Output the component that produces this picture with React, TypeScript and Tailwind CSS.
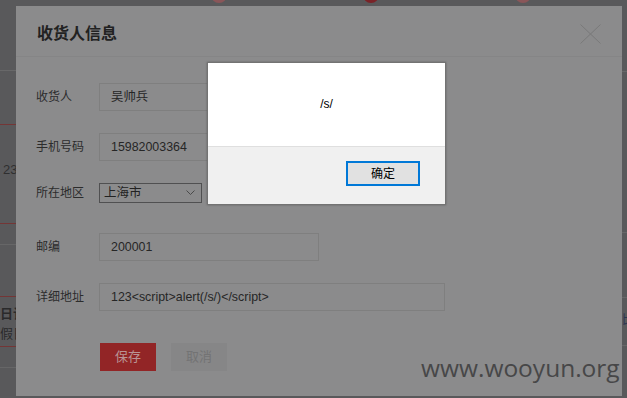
import React from "react";

const cjk = { fontFamily: '"Liberation Sans","Noto Sans CJK SC",sans-serif' };

function Label({ children, className = "" }: { children: React.ReactNode; className?: string }) {
  return (
    <div className={"w-[63px] shrink-0 text-[12px] text-[#2c2c2c] " + className}>{children}</div>
  );
}

function Input({ value, w }: { value: string; w: string }) {
  return (
    <div
      className={
        "h-[28px] border border-[#7f7f7f] flex items-center pl-[11px] text-[12.4px] text-[#262626] " + w
      }
    >
      {value}
    </div>
  );
}

export default function App() {
  return (
    <div
      className="relative w-[627px] h-[398px] overflow-hidden bg-[#59595b]"
      style={cjk}
    >
      {/* background page */}
      <div className="flex h-full">
        <div className="w-[16px] flex flex-col shrink-0">
          <div className="h-[70px]" />
          <div className="h-[1px] bg-[#686869]" />
          <div className="h-[53px]" />
          <div className="h-[1px] bg-[#743636]" />
          <div className="h-[98px] flex items-center pl-[3px] text-[13px] text-[#2f2f30] pb-[9px]">23</div>
          <div className="h-[1px] bg-[#743636]" />
          <div className="h-[20px]" />
          <div className="h-[1px] bg-[#666667]" />
          <div className="h-[51px]" />
          <div className="h-[1px] bg-[#743636]" />
          <div className="h-[49px] flex flex-col pt-[7px] text-[13px] leading-[20px] text-[#2a2a2b] whitespace-nowrap">
            <span className="font-bold">日记</span>
            <span>假日</span>
          </div>
          <div className="h-[1px] bg-[#743636]" />
          <div className="h-[20px]" />
          <div className="h-[1px] bg-[#666667]" />
        </div>
        <div className="flex-1 relative">
          <div className="flex pl-[195px] gap-[136px] -mt-[13px]">
            <div className="w-[16px] h-[16px] rounded-full bg-[#8a5659]" />
            <div className="w-[16px] h-[16px] rounded-full bg-[#7b2328]" />
            <div className="w-[16px] h-[16px] rounded-full bg-[#8a5659]" />
          </div>
        </div>
        <div className="w-[5px] flex flex-col shrink-0 overflow-hidden">
          <div className="h-[71px]" />
          <div className="h-[1px] bg-[#686869]" />
          <div className="h-[160px]" />
          <div className="h-[1px] bg-[#676768]" />
          <div className="h-[64px]" />
          <div className="h-[1px] bg-[#676768]" />
          <div className="h-[47px] text-[12px] text-[#2c3550] pt-[16px] leading-none">比</div>
          <div className="h-[1px] bg-[#676768]" />
        </div>
      </div>

      {/* modal */}
      <div className="absolute left-[16px] top-[6px] w-[606px] h-[390px] bg-[#8b8b8c] flex flex-col">
        <div className="h-[51px] border-b border-[#858586] flex items-center justify-between pl-[21px] pr-[21px] shrink-0">
          <div className="text-[16px] font-bold text-[#222] pt-[6px]">收货人信息</div>
          <svg width="21" height="20" viewBox="0 0 21 20" className="mt-[5px]">
            <path d="M0.5 0.5 L20.5 19.5 M20.5 0.5 L0.5 19.5" stroke="#797979" strokeWidth="1" />
          </svg>
        </div>
        <div className="flex flex-col pl-[20px] pt-[26px]">
          <div className="flex items-center h-[28px]">
            <Label>收货人</Label>
            <Input value="吴帅兵" w="w-[220px]" />
          </div>
          <div className="flex items-center h-[28px] mt-[22px]">
            <Label>手机号码</Label>
            <Input value="15982003364" w="w-[220px]" />
          </div>
          <div className="flex items-center h-[20px] mt-[22px]">
            <Label>所在地区</Label>
            <div className="w-[103px] h-[20px] border border-[#505051] flex items-center justify-between pl-[4px] pr-[6px] text-[12.5px] text-[#222]">
              <span>上海市</span>
              <svg width="9" height="6" viewBox="0 0 9 6">
                <path d="M0.5 0.5 L4.5 4.5 L8.5 0.5" stroke="#4a4a4a" strokeWidth="1" fill="none" />
              </svg>
            </div>
          </div>
          <div className="flex items-center h-[28px] mt-[30px]">
            <Label>邮编</Label>
            <Input value="200001" w="w-[220px]" />
          </div>
          <div className="flex items-center h-[28px] mt-[22px]">
            <Label>详细地址</Label>
            <Input value="123<script>alert(/s/)</script>" w="w-[346px]" />
          </div>
          <div className="flex gap-[15px] mt-[32px] pl-[64px]">
            <div className="w-[56px] h-[28px] bg-[#922526] flex items-center justify-center text-[13px] text-[#b99495]">
              保存
            </div>
            <div className="w-[56px] h-[28px] bg-[#868687] flex items-center justify-center text-[13px] text-[#737374]">
              取消
            </div>
          </div>
        </div>
      </div>

      {/* alert */}
      <div className="absolute left-[207px] top-[62px] w-[239px] h-[143px] border border-[#737373] bg-white flex flex-col shadow-[0_0_2px_rgba(0,0,0,0.3)]">
        <div className="h-[83px] flex items-center justify-center text-[12px] text-black pb-[1px]">/s/</div>
        <div className="flex-1 bg-[#f0f0f0] border-t border-[#dfdfdf] flex justify-end pr-[25px] pt-[14px]">
          <div className="w-[74px] h-[25px] bg-[#e1e1e1] border-2 border-[#0078d7] flex items-center justify-center text-[12px] text-black">
            确定
          </div>
        </div>
      </div>

      {/* watermark */}
      <div
        className="absolute left-[421px] top-[352px] text-[24.5px] leading-[32px] text-[#474748] whitespace-nowrap"
        style={{ fontFamily: '"Open Sans",sans-serif' }}
      >
        www.wooyun.org
      </div>
    </div>
  );
}
